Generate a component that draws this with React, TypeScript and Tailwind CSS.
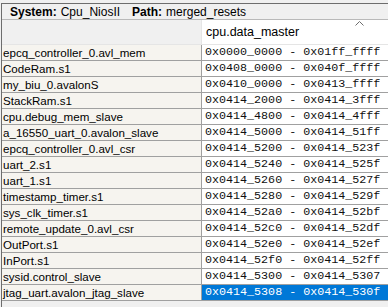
const rows: [string, string][] = [
  ['epcq_controller_0.avl_mem', '0x0000_0000 - 0x01ff_ffff'],
  ['CodeRam.s1', '0x0408_0000 - 0x040f_ffff'],
  ['my_biu_0.avalonS', '0x0410_0000 - 0x0413_ffff'],
  ['StackRam.s1', '0x0414_2000 - 0x0414_3fff'],
  ['cpu.debug_mem_slave', '0x0414_4800 - 0x0414_4fff'],
  ['a_16550_uart_0.avalon_slave', '0x0414_5000 - 0x0414_51ff'],
  ['epcq_controller_0.avl_csr', '0x0414_5200 - 0x0414_523f'],
  ['uart_2.s1', '0x0414_5240 - 0x0414_525f'],
  ['uart_1.s1', '0x0414_5260 - 0x0414_527f'],
  ['timestamp_timer.s1', '0x0414_5280 - 0x0414_529f'],
  ['sys_clk_timer.s1', '0x0414_52a0 - 0x0414_52bf'],
  ['remote_update_0.avl_csr', '0x0414_52c0 - 0x0414_52df'],
  ['OutPort.s1', '0x0414_52e0 - 0x0414_52ef'],
  ['InPort.s1', '0x0414_52f0 - 0x0414_52ff'],
  ['sysid.control_slave', '0x0414_5300 - 0x0414_5307'],
  ['jtag_uart.avalon_jtag_slave', '0x0414_5308 - 0x0414_530f'],
];

const App = () => (
  <div className="w-[388px] h-[307px] overflow-hidden bg-[#f0f0f0] pt-[3px] pl-[1px] font-['Liberation_Sans',sans-serif] text-[12px] text-black">
    <div className="h-[304px] border-t border-l border-[#6d6d6d] flex flex-col">
      <div className="h-[16px] flex items-center pl-[8px] bg-[#f0f0f0] border-b border-[#b9b9b9] whitespace-nowrap">
        <b>System:</b>
        <span className="ml-[4px]">Cpu_NiosII</span>
        <b className="ml-[12px]">Path:</b>
        <span className="ml-[4px]">merged_resets</span>
      </div>
      <div className="flex h-[25px] border-b border-[#e5e5e5]">
        <div className="w-[200px] bg-[#f0f0f0] border-r border-[#e5e5e5]" />
        <div className="flex-1 bg-white relative pl-[4px] flex items-end pb-[2px] text-[12.5px]">
          <svg className="absolute left-[153px] top-[1px]" width="9" height="5" viewBox="0 0 9 5">
            <path d="M0.5 4.5 L4.5 0.5 L8.5 4.5" fill="none" stroke="#6d6d6d" strokeWidth="1" />
          </svg>
          cpu.data_master
        </div>
      </div>
      <div className="flex flex-col">
        {rows.map(([name, range], i) => {
          const sel = i === rows.length - 1;
          return (
            <div key={name} className="flex h-[16px] border-b border-[#a0a0a0]">
              <div className="w-[200px] bg-[#f6f4ef] border-r border-[#a0a0a0] pl-[1px] leading-[15px] whitespace-nowrap text-[11.6px]">
                {name}
              </div>
              <div
                className={
                  sel
                    ? 'flex-1 bg-[#0078d7] text-white pl-[3px] leading-[15px] whitespace-nowrap font-["Liberation_Mono",monospace] text-[11.7px]'
                    : 'flex-1 bg-white text-[#101010] pl-[3px] leading-[15px] whitespace-nowrap font-["Liberation_Mono",monospace] text-[11.7px]'
                }
              >
                {range}
              </div>
            </div>
          );
        })}
      </div>
    </div>
  </div>
);

export default App;
